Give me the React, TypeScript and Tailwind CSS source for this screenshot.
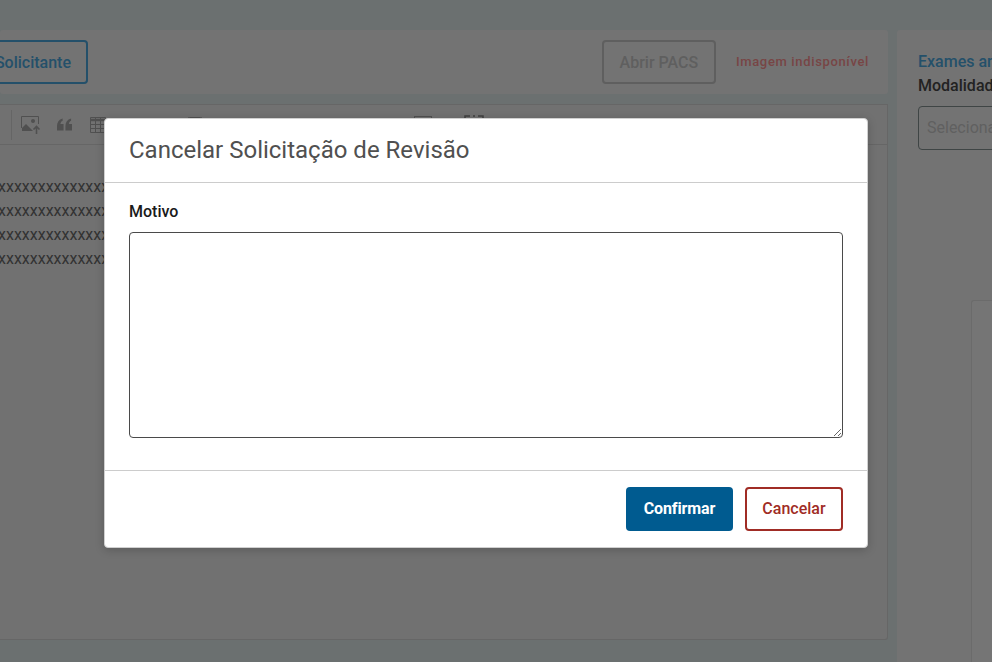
export default function App() {
  const lines = [0, 1, 2, 3];
  return (
    <div className="relative h-[662px] w-[992px] overflow-hidden bg-[#6b7070] font-['Roboto',sans-serif]">
      <div className="flex h-[662px] flex-col pt-[30px]">
        <div className="flex min-h-0 flex-1">
          <div className="flex w-[888px] shrink-0 flex-col">
            <div className="flex h-[64px] items-center justify-end rounded-[3px] bg-[#737373] pr-[19px]">
              <div className="mr-auto -ml-[12px] flex h-[44px] w-[100px] items-center justify-end rounded-[4px] border-2 border-[#24506a] pt-[1px] pr-[15px] text-[16px] font-medium whitespace-nowrap text-[#24506a]">
                Solicitante
              </div>
              <div className="flex h-[44px] w-[114px] items-center justify-center rounded-[4px] border-2 border-[#5f5f5f] pt-[1px] text-[16px] font-medium text-[#5f5f5f]">
                Abrir PACS
              </div>
              <div className="ml-[20px] text-[13px] font-medium tracking-[0.65px] whitespace-nowrap text-[#784545]">
                Imagem indisponível
              </div>
            </div>
            <div className="mt-[10px] mb-[22px] flex min-h-0 flex-1 flex-col rounded-br-[3px] border-t border-r border-b border-[#666666] bg-[#717171]">
              <div className="relative flex h-[40px] shrink-0 items-center border-b border-[#666666]">
                <div className="ml-[11px] h-[30px] w-px bg-[#656565]" />
                <svg viewBox="0 0 20 18" className="ml-[9px] h-[18px] w-[20px]" fill="none">
                  <path d="M.5 12V.5h17V8" stroke="#505050" />
                  <path d="M1 15V12l4-4 4 4 3 3H1z" fill="#505050" />
                  <circle cx="12" cy="5" r="2" fill="#505050" />
                  <path d="M15.5 18v-7M12.5 13.5l3-3 3 3" stroke="#505050" strokeWidth="1.6" />
                </svg>
                <svg viewBox="0 0 16 13" className="ml-[16px] h-[13px] w-[15px]" fill="#505050">
                  <path d="M0 13V8c0-4 2-7 6-8v2.500C4.500 3.200 3.800 4.500 3.700 6H7v7H0zM9 13V8c0-4 2-7 6-8v2.500c-1.500.7-2.200 2-2.300 3.500H16v7H9z" />
                </svg>
                <svg viewBox="0 0 16 16" className="ml-[18px] h-[16px] w-[16px]" fill="none" stroke="#505050">
                  <path d="M.5.500h15v15H.5z" />
                  <path d="M.5 3h15" strokeWidth="2.500" />
                  <path d="M5.500 1v14M10.500 1v14M1 7.500h14M1 11.500h14" />
                </svg>
                <svg viewBox="0 0 16 16" className="ml-[81px] h-[16px] w-[16px]" fill="none" stroke="#505050">
                  <rect x=".5" y=".5" width="15" height="15" rx="2" />
                </svg>
                <svg viewBox="0 0 18 18" className="ml-[211px] h-[18px] w-[18px]" fill="none" stroke="#505050">
                  <rect x=".5" y=".5" width="17" height="17" />
                </svg>
                <svg viewBox="0 0 20 20" className="ml-[32px] h-[20px] w-[20px]" fill="none" stroke="#404040" strokeWidth="1.500">
                  <path d="M1 6V1h5M9 1h2M14 1h5v5M1 14v5h5M19 14v5h-5" />
                </svg>
              </div>
              <div className="overflow-hidden pt-[30px] text-[16px] leading-[24px] text-[#333333]">
                {lines.map((line) => (
                  <div key={line} className="-ml-[2px] whitespace-nowrap">
                    xxxxxxxxxxxxxxxxxxxxxxxxxx
                  </div>
                ))}
              </div>
            </div>
          </div>
          <div className="ml-[9px] flex-1 overflow-hidden rounded-t-[3px] bg-[#737373] pt-[22px] pl-[21px]">
            <div className="text-[16px] leading-[19px] font-medium whitespace-nowrap text-[#24506a]">Exames anteriores</div>
            <div className="mt-[5px] text-[16px] leading-[19px] font-medium whitespace-nowrap text-[#222222]">Modalidade</div>
            <div className="mt-[11px] flex h-[44px] w-[200px] items-center rounded-[4px] border border-[#3f4545] pl-[8px] text-[16px] whitespace-nowrap text-[#606060]">
              Selecionar
            </div>
            <div className="mt-[150px] ml-[53px] h-[400px] w-[100px] rounded-tl-[3px] border-t border-l border-[#6b6b6b] bg-[#757575]" />
          </div>
        </div>
      </div>

      <div className="absolute top-[118px] left-[104px] flex h-[430px] w-[764px] flex-col rounded-[4px] border border-[#d0d0d0] bg-white shadow-[0_2px_10px_rgba(0,0,0,0.2)]">
        <div className="flex h-[64px] shrink-0 items-center border-b border-[#cccccc] px-[24px] pb-[2px] text-[24px] text-[#505050]">
          Cancelar Solicitação de Revisão
        </div>
        <div className="flex flex-1 flex-col border-b border-[#cccccc] px-[24px] pt-[19px]">
          <label className="text-[16px] leading-[19px] font-medium text-[#1a1a1a]">Motivo</label>
          <textarea className="mt-[11px] block h-[206px] w-[714px] rounded-[4px] border border-[#4a4a4a] bg-white outline-none" />
        </div>
        <div className="flex h-[76px] shrink-0 items-start justify-end gap-[12px] px-[24px] pt-[16px]">
          <button className="h-[44px] w-[107px] rounded-[4px] bg-[#005b90] text-[16px] font-bold tracking-[-0.1px] text-white">Confirmar</button>
          <button className="h-[44px] w-[98px] rounded-[4px] border-2 border-[#a02c25] bg-white text-[16px] font-medium text-[#a02c25]">Cancelar</button>
        </div>
      </div>
    </div>
  );
}
